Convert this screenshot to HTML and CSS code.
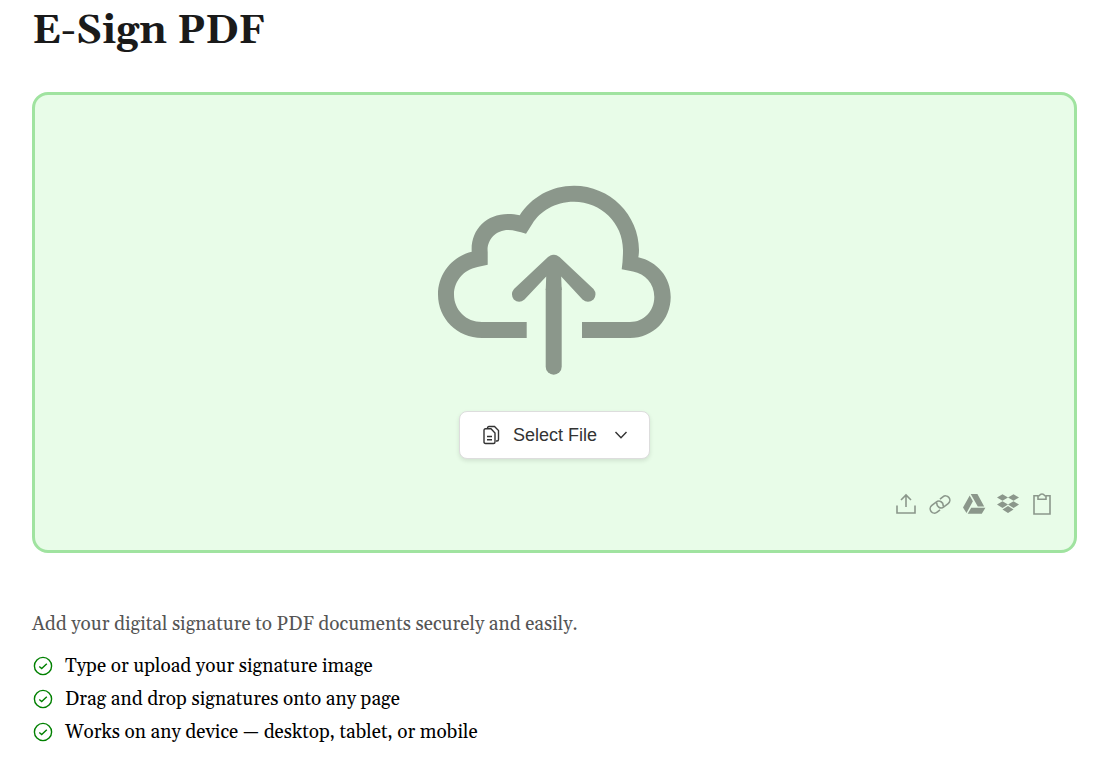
FILE: index.html
```html
<!DOCTYPE html>
<html lang="en">
<head>
<meta charset="utf-8">
<meta name="viewport" content="width=device-width, initial-scale=1">
<title>E-Sign PDF</title>
<link rel="stylesheet" href="styles.css">
</head>
<body>
<main class="page">
  <h1 class="title">E-Sign PDF</h1>

  <section class="dropzone" aria-label="Upload a file">
    <svg class="cloud" viewBox="1 0 240 200" aria-hidden="true">
      <path fill="currentColor" d="M92.700 158H48C23 158 4 138.500 4 114.500C4 94 18 76.500 37.700 71.700C36.500 50 52 34 74 34C78 34 82 34.500 85.700 35.300C97 17.500 117 5.700 140 5.700C176 5.700 205 35 205 70Q205 74 204.300 77.300C223 81.500 236.700 97 236.700 117C236.700 140 219 158 196 158H148V142H196C210 142 220.300 131 220.300 117C220.300 103 211 94 199 91.500L187.700 89.300Q189 80 189 70C189 43 167 21.700 140 21.700C120.500 21.700 106 31.500 98.500 43.500L92 53.700C85 51.800 80 50 74.300 50C61 50 52.500 61 53.700 72V84.700L43.500 87C29 90 20 101.500 20 114.500C20 130 32 142 48 142H92.700Z"/>
      <path fill="none" stroke="currentColor" stroke-width="16" stroke-linecap="round" d="M119.700 110V186.700"/>
      <path fill="currentColor" d="M114 77Q119.700 72.500 125.500 77L159.500 109Q163.500 114 159.500 119.500Q154 124 148.500 119.500L127.200 96.500L127.700 110H111.700L112.200 96.500L90.500 119.500Q85 124 79.800 119.500Q76 114 80 109Z"/>
    </svg>

    <button class="select-file" type="button">
      <svg class="file-icon" viewBox="0 0 18 20" aria-hidden="true">
        <path d="M4.500 3.500V3Q4.500 1.500 6 1.500H11.500L15.500 5.500V14.500Q15.500 16 14 16H13M2.500 3.800H8L12 8V17Q12 18.500 10.500 18.500H2.500Q1 18.500 1 17V5.300Q1 3.800 2.500 3.800ZM4 11.500H9M4 14.800H9"/>
      </svg>
      <span>Select File</span>
      <svg class="chevron" viewBox="0 0 14 8" aria-hidden="true"><path d="M1.500 1L7 6.800L12.500 1"/></svg>
    </button>

    <div class="sources">
      <button class="source" type="button" aria-label="Upload from device">
        <svg viewBox="0 0 22 22" aria-hidden="true"><path class="line" d="M2 12.500V20H20V12.500M11 14V2.500M6 7L11 2L16 7"/></svg>
      </button>
      <button class="source" type="button" aria-label="Upload from link">
        <svg viewBox="0 0 22 22" aria-hidden="true"><path class="line" transform="translate(11 11.500) rotate(-38)" d="M-3.300 4.300H-7A4.300 4.300 0 0 1 -7 -4.300H-1.500A4.300 4.300 0 0 1 1.300 3.300M3.300 -4.300H7A4.300 4.300 0 0 1 7 4.300H1.500A4.300 4.300 0 0 1 -1.300 -3.300"/></svg>
      </button>
      <button class="source" type="button" aria-label="Upload from Google Drive">
        <svg viewBox="0 0 22 22" aria-hidden="true"><path fill="currentColor" d="M7.700 1H14.400L21.200 13.500H14.800ZM6.700 2.500L9.900 8.300L3.500 20L0 14.500ZM8.200 14.800H22.400L18.800 20.700H4.700Z"/></svg>
      </button>
      <button class="source" type="button" aria-label="Upload from Dropbox">
        <svg viewBox="0 0 22 22" aria-hidden="true"><path fill="currentColor" d="M5.500 1.300L11 4.500L5.500 7.800L0 4.500ZM16.500 1.300L22 4.500L16.500 7.800L11 4.500ZM5.500 8.300L11 11.600L5.500 14.900L0 11.600ZM16.500 8.300L22 11.600L16.500 14.900L11 11.600ZM11 13.100L16.500 16.400L11 19.900L5.500 16.400Z"/></svg>
      </button>
      <button class="source" type="button" aria-label="Paste from clipboard">
        <svg viewBox="0 0 22 22" aria-hidden="true"><path class="line" d="M7 2.800H3V21H19V2.800H15M7 3.300L8.500 2.500Q9.200 1 11 1T13.500 2.500L15 3.300V6.200H7Z"/></svg>
      </button>
    </div>
  </section>

  <p class="intro">Add your digital signature to PDF documents securely and easily.</p>
  <ul class="features">
    <li class="feature"><svg class="check" viewBox="0 0 20 20" aria-hidden="true"><circle cx="10" cy="10" r="8.600"/><path d="M6.300 10.400L8.700 12.600L13.800 7.800"/></svg>Type or upload your signature image</li>
    <li class="feature"><svg class="check" viewBox="0 0 20 20" aria-hidden="true"><circle cx="10" cy="10" r="8.600"/><path d="M6.300 10.400L8.700 12.600L13.800 7.800"/></svg>Drag and drop signatures onto any page</li>
    <li class="feature"><svg class="check" viewBox="0 0 20 20" aria-hidden="true"><circle cx="10" cy="10" r="8.600"/><path d="M6.300 10.400L8.700 12.600L13.800 7.800"/></svg>Works on any device — desktop, tablet, or mobile</li>
  </ul>
</main>
</body>
</html>
```
FILE: styles.css
```css
* {
  box-sizing: border-box;
}

body {
  margin: 0;
  background: #fff;
  color: #000;
  font-family: Georgia, Gelasio, "Liberation Serif", serif;
}

.page {
  padding: 0 22px 32px 32px;
}

.title {
  margin: 0 0 28px;
  color: #1a1a1a;
  font-size: 40px;
  line-height: 64px;
  font-weight: 700;
}

.dropzone {
  display: flex;
  flex-direction: column;
  align-items: center;
  padding: 85px 21px 35px;
  border: 3px solid #a0e3a0;
  border-radius: 16px;
  background: #e8fce8;
}

.cloud {
  display: block;
  width: 240px;
  height: 200px;
  color: #8b978b;
}

.select-file {
  display: flex;
  align-items: center;
  height: 48px;
  margin-top: 31px;
  padding: 0 21px 0 23px;
  border: 1px solid #ddd;
  border-radius: 8px;
  background: #fff;
  box-shadow: 0 2px 4px rgba(0, 0, 0, 0.1);
  color: #333;
  font: 18px/24px "Liberation Sans", Arial, sans-serif;
  cursor: pointer;
}

.file-icon,
.chevron,
.line,
.check {
  fill: none;
  stroke: currentColor;
  stroke-width: 1.4px;
}

.file-icon {
  width: 18px;
  height: 20px;
  margin-right: 12px;
}

.chevron {
  width: 14px;
  height: 8px;
  margin-left: 17px;
}

.sources {
  display: flex;
  align-self: flex-end;
  gap: 12px;
  margin-top: 34px;
}

.source {
  padding: 0;
  border: 0;
  background: none;
  color: #8b978b;
  cursor: pointer;
}

.source svg {
  display: block;
  width: 22px;
  height: 22px;
  overflow: visible;
}

.source .line {
  stroke-width: 1.6px;
}

.intro {
  margin: 55px 0 10px;
  color: #555;
  font-size: 19px;
  line-height: 32px;
}

.features {
  display: grid;
  gap: 1px;
  margin: 0;
  padding: 0;
  list-style: none;
}

.feature {
  display: flex;
  align-items: center;
  gap: 12px;
  font-size: 19px;
  line-height: 32px;
}

.check {
  width: 20px;
  height: 20px;
  margin-left: 1px;
  color: #008000;
}
```
